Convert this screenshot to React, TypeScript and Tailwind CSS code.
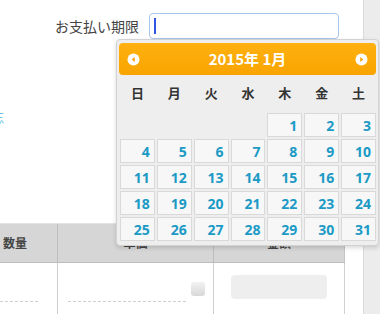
import React from "react";

const JP = '"Noto Sans CJK JP", "Noto Sans", sans-serif';

function NavIcon({ dir }: { dir: "prev" | "next" }) {
  return (
    <svg width="13" height="13" viewBox="0 0 13 13">
      <circle cx="6.5" cy="6.5" r="6" fill="#ffffff" />
      {dir === "prev" ? (
        <polygon points="7.8,4 4.6,6.5 7.8,9" fill="#f8a50a" />
      ) : (
        <polygon points="5.2,4 8.4,6.5 5.2,9" fill="#f8a50a" />
      )}
    </svg>
  );
}

export default function App() {
  const cells: (number | null)[] = [null, null, null, null];
  for (let d = 1; d <= 31; d++) cells.push(d);
  const names = ["日", "月", "火", "水", "木", "金", "土"];

  return (
    <div
      className="relative flex h-[314px] w-[380px] overflow-hidden bg-white"
      style={{ fontFamily: JP }}
    >
      <div className="flex w-[364px] shrink-0 flex-col border-r border-[#dadada]">
        <div className="flex items-center justify-end gap-[10px] pr-[24px] pt-[13px]">
          <span className="text-[14px] leading-[20px] text-[#444]">お支払い期限</span>
          <div className="flex h-[26px] w-[190px] items-center rounded-[4px] border border-[#a7c5e6] bg-white pl-[4px]">
            <div className="h-[16px] w-[2px] bg-[#2f55e0]" />
          </div>
        </div>
        <div className="-ml-[9px] mt-[71px] h-[14px] text-[13px] leading-[14px] text-[#6cc4e2]">
          忘
        </div>
        <div className="mt-[99px] flex h-[46px] w-[345px] border-b border-r border-t border-b-[#bdbdbd] border-r-[#c4c4c4] border-t-[#e2e2e2] bg-[#d6d6d6] text-[12px] font-bold text-[#444]">
          <div className="flex w-[58px] shrink-0 items-center border-r border-[#bdbdbd] pl-[3px]">数量</div>
          <div className="flex w-[156px] shrink-0 items-center justify-center border-r border-[#bdbdbd]">単価</div>
          <div className="flex flex-1 items-center justify-center">金額</div>
        </div>
        <div className="flex h-[60px] w-[345px] border-r border-[#d0d0d0]">
          <div className="flex w-[58px] shrink-0 flex-col border-r border-[#cfcfcf] pr-[19px] pt-[38px]">
            <div className="border-t border-dashed border-[#cfcfcf]" />
          </div>
          <div className="flex w-[156px] shrink-0 items-start border-r border-[#cfcfcf] pl-[10px] pr-[8px]">
            <div className="mt-[38px] flex-1 border-t border-dashed border-[#cfcfcf]" />
            <div className="ml-[5px] mt-[19px] h-[14px] w-[14px] rounded-[3px] bg-gradient-to-b from-[#f2f2f2] to-[#d8d8d8]" />
          </div>
          <div className="flex-1 px-[17px] pt-[12px]">
            <div className="h-[24px] rounded-[4px] bg-[#eeeeee]" />
          </div>
        </div>
      </div>
      <div className="flex-1 bg-[#ececec]" />

      <div className="absolute left-[116px] top-[39px] w-[263px] rounded-[4px] border border-[#d2d2d2] bg-[#eeeeee] px-[2px] pb-[4px] pt-[3px] shadow-[0_2px_4px_rgba(0,0,0,0.15)]">
        <div className="flex h-[32px] items-center justify-between rounded-[4px] bg-gradient-to-b from-[#ffb10f] to-[#f9a400] px-[8px]">
          <NavIcon dir="prev" />
          <span className="text-[15px] font-bold text-white">2015年 1月</span>
          <NavIcon dir="next" />
        </div>
        <div className="grid h-[36px] grid-cols-7 gap-[2px] pl-[1px]">
          {names.map((n) => (
            <div key={n} className="flex items-center justify-center text-[13px] font-bold text-[#333]">
              {n}
            </div>
          ))}
        </div>
        <div className="mt-[2px] grid grid-cols-7 gap-[2px] pl-[1px]">
          {cells.map((d, i) =>
            d === null ? (
              <div key={i} className="h-[24px]" />
            ) : (
              <div
                key={i}
                className="flex h-[24px] items-center justify-end border border-[#d9d9d9] bg-[#f7f7f7] pr-[4px] text-[14px] font-bold text-[#1b9ac6]"
                style={{ fontFamily: '"Open Sans", sans-serif' }}
              >
                {d}
              </div>
            )
          )}
        </div>
      </div>
    </div>
  );
}
